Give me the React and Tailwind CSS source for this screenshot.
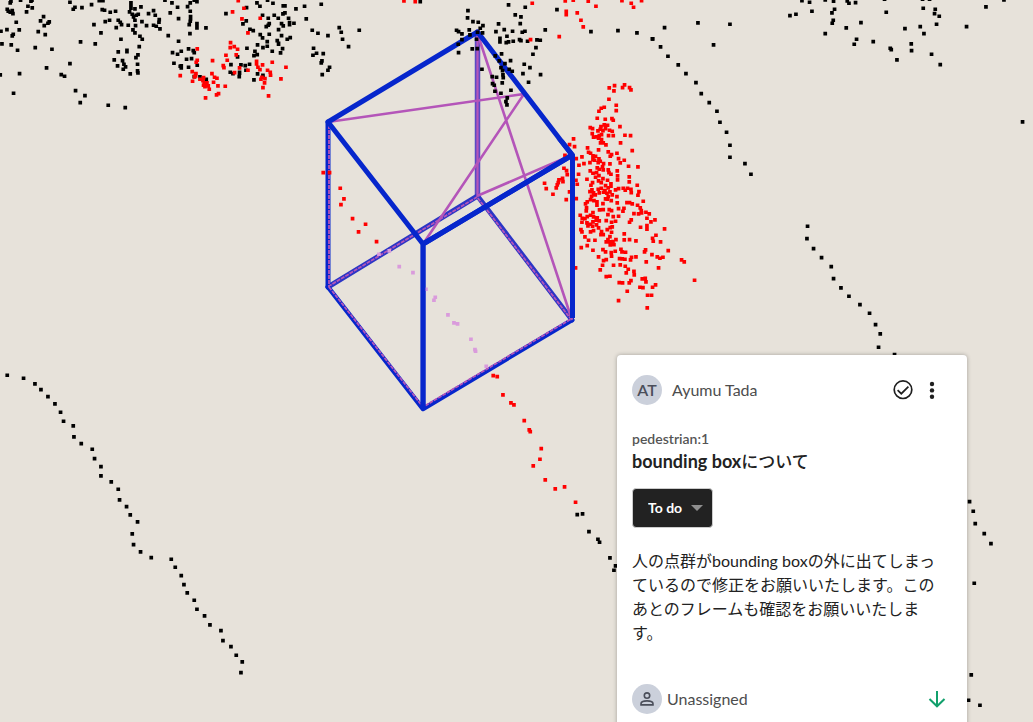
// Each group lists x,y pairs in thirds of a scene unit, relative to its origin.
const GROUPS = [
  {
    color: "#000000", x: 0, y: 0,
    pts: "32,3 30,8 61,0 92,3 95,0 21,27 24,33 36,31 38,40 30,36 83,18 79,35 96,23 48,66 20,88 2,93 57,89 39,102 36,107 5,131 33,134 52,150 105,142 155,147 130,49 121,62 147,65 143,69 132,76 114,94 135,103 209,6 224,21 219,27 245,22 274,13 297,1 308,1 306,28 313,30 330,36 346,33 281,73 315,64 328,60 302,98 241,125 285,131 209,190 139,203 58,220 0,224 40,279 183,223 193,228 226,271 254,286 240,307 324,315 375,322 392,8 392,15 392,24 404,26 422,20 388,35 396,42 400,50 414,42 408,45 404,60 354,60 360,66 364,73 348,82 384,75 406,76 425,64 439,76 445,40 460,31 465,45 477,58 476,66 460,75 468,78 479,86 398,89 404,98 419,108 426,117 362,117 417,139 354,155 380,150 380,154 342,179 367,181 413,164 407,172 352,197 371,192 369,207 376,200 390,221 412,192 412,212 413,218 494,0 515,8 532,21 510,38 535,55 504,106 535,123 517,157 532,162 521,189 540,198",
  },
  {
    color: "#000000", x: 180, y: 0,
    pts: "42,0 50,4 30,8 22,19 30,33 31,49 31,56 30,63 27,73 50,70 50,83 77,83 29,100 3,153 25,146 39,151 42,157 19,177 34,175 51,195 3,197 3,203 25,201 42,229 59,230 78,237 137,40 199,22 262,0 230,8 239,18 278,9 309,17 314,17 373,18 347,26 423,12 378,56 314,38 308,41 282,45 247,45 264,54 294,54 325,54 198,62 188,71 267,70 264,75 258,79 304,70 309,77 328,67 328,73 341,69 295,88 209,87 219,91 240,103 267,102 304,106 247,113 261,124 261,138 232,134 248,142 321,117 330,112 291,121 295,129 295,132 307,145 301,158 276,153 200,144 224,153 231,163 221,166 172,170 152,193 182,194 195,196 208,192 197,210 150,216 158,220 178,216 177,229 232,221 248,225 221,239 396,90 413,99 443,106 477,82 483,96 487,117 505,139 537,90 400,144 398,165 409,159 429,160 425,182 423,188 448,201 443,210 426,223 178,219 50,74 720,4",
  },
  {
    color: "#ff0000", x: 180, y: 0,
    pts: "174,1 157,35 191,24 185,56 240,54 203,98 151,127 150,142 162,139 172,147 168,164 137,165 141,180 129,196 131,202 178,203 203,210 163,217 51,146 51,180 48,186 97,181 0,226 36,214 47,220 43,230 37,243 59,237 70,232 68,241 72,248 76,253 74,259 80,248 84,257 87,267 95,220 103,231 110,234 100,246 113,257 135,258 115,280 109,284 76,293 229,183 229,191 247,194 233,201 239,208 276,186 317,201 262,210 270,216 271,225 245,231 242,237 254,235 253,248 248,262 265,287 302,236 46,227 671,2 705,4 70,255",
  },
  {
    color: "#000000", x: 440, y: 0,
    pts: "83,31 82,53 98,64 114,66 120,84 128,76 127,98 112,96 89,104 87,89 49,90 55,94 65,101 65,118 54,132 55,157 109,117 96,146 111,145 125,207 205,14 255,21 225,44 242,50 240,70 175,71 192,88 167,94 217,93 246,96 254,93 315,89 200,108 179,114 179,125 198,127 205,125 219,123 238,118 242,121 262,123 290,119 300,120 287,142 278,162 184,161 165,167 177,182 211,181 194,190 182,202 187,211 207,207 216,213 252,192 269,202 301,223 248,220 188,224 189,232 156,229 169,231 265,246 186,248 157,250 162,255 164,273 182,279 212,270 201,293 197,304 200,314 350,28 452,94 533,91 590,98 637,116",
  },
  {
    color: "#ff0000", x: 440, y: 0,
    pts: "276,9 375,2 399,0 378,33 378,43 411,38 422,60 429,80 444,3 467,18 545,1 573,9 580,21 604,1 357,109 271,118",
  },
  {
    color: "#000000", x: 640, y: 0,
    pts: "37,116 73,82 61,140 83,168 114,194 137,220 167,247 183,280 207,307 230,333 239,366 259,396 269,435 269,471 314,490 332,522 173,68 269,72 220,134 485,1 508,6 555,-1 580,3 621,2 626,9 646,7 449,46 467,42 515,33 583,27 575,38 579,60 576,69 555,100 618,83 662,67 649,117 642,132 699,124 738,36 733,-3 847,-3 868,-3 849,24 885,27 883,40 897,48 889,72 840,79 794,85 851,100 813,131 814,151 750,144 753,148 770,179 874,162 900,193 979,79 1037,20 1091,-1 1147,365",
  },
  {
    color: "#ff0000", x: 530, y: 75,
    pts: "237,38 253,31 251,47 283,29 277,37 298,37 302,44 236,72 258,90 258,106 222,96 213,99 206,108 201,129 225,132 245,130 249,135 180,157 187,160 212,154 210,162 203,167 222,149 232,150 226,160 218,166 238,165 246,168 269,154 186,175 190,186 198,185 207,181 214,178 205,189 214,193 235,181 249,181 284,180 301,181 211,203 219,203 227,209 271,203 130,191 118,208 133,214 172,218 205,224 175,231 181,234 188,242 234,230 244,238 240,243 260,234 306,226 104,240 138,250 155,245 196,243 193,255 206,251 204,262 210,258 188,253 265,250 270,263 282,255 146,270 161,265 179,262 220,265 217,275 201,278 207,282 219,284 239,266 234,284 295,273 323,275 101,279 109,286 111,298 145,297 180,287 188,294 199,292 206,301 196,306 236,292 242,297 261,287 262,302 297,305 170,312 97,309 86,314 84,322 98,319 81,329 78,338 43,324 48,340 68,357 108,373 137,315 141,327 118,350 138,370 187,322 182,330 205,317 213,322 218,310 232,315 226,331 213,339 204,342 224,346 234,338 242,326 242,333 256,344 262,314 265,340 279,339 285,345 292,339 302,342 303,352 297,320 321,330 326,349 323,360 179,349 185,344 190,353 184,363 195,359 207,353 220,351 230,354 239,350 246,359 234,364 226,371 181,373 171,380 166,386 191,376 200,380 218,385 231,372 243,376 260,364 261,383 290,382 298,382 306,386 339,378 322,390 330,398 333,406 311,415 325,416 334,413 347,411 357,416 169,398 168,407 200,390 208,404 188,412 181,420 171,424 219,403 237,403 244,406 265,400 281,399 278,408 249,424 265,423 233,418 150,420 156,429 164,430 190,425 201,428 198,435 188,440 181,447 170,443 155,441 207,437 228,436 244,441 256,438 303,434 298,441 350,429 362,440 374,434 152,463 155,470 173,452 187,453 199,449 205,458 190,466 181,470 214,469 240,457 246,455 244,471 231,463 331,456 350,451 350,462 403,461 164,485 175,495 194,495 212,478 219,478 239,484 233,493 228,500 237,500 257,493 248,499 282,476 282,494 298,493 317,497 240,509 251,508 367,489 369,498 377,480 391,500 153,517 171,511 188,525 218,523 226,530 243,532 244,543 255,528 272,522 275,530 286,531 346,524 343,530 365,538 414,526 205,545 228,553 220,556 217,570 250,570 268,550 276,551 284,552 304,546 301,554 317,545 348,560 381,545 389,549 398,546 454,554 462,560 210,584 270,569 285,573 294,582 288,593 311,588 312,599 385,578 136,578 228,604 239,603 267,622 277,623 302,616 297,623 336,611 345,609 347,620 329,636 338,637 367,636 376,629 291,648 352,660 364,660 265,676 351,698 493,615",
  },
  {
    color: "#ff0000", x: 310, y: 80,
    pts: "39,277 58,277 90,324 101,356 92,373 127,415 166,432 145,455 199,484",
  },
  {
    color: "#da9bdc", x: 310, y: 80,
    pts: "206,522 237,512 267,559 308,577 347,627 375,651 371,660 413,704 431,728 442,731 482,777 494,808 496,813 528,858",
  },
  {
    color: "#ff0000", x: 470, y: 360,
    pts: "69,46 81,49 98,104 122,128 131,134 162,181 177,209 180,214 213,265 209,297 189,317 225,359 255,386 283,380 316,426",
  },
  {
    color: "#000000", x: 470, y: 360,
    pts: "321,463 337,461 356,514 383,537 388,546 419,593 436,617 431,630",
  },
  {
    color: "#000000", x: 0, y: 360,
    pts: "21,45 70,54 104,71 122,88 143,109 164,131 181,156 190,183 219,197 221,230 243,250 276,267 283,295 302,319 302,347 333,365 354,387 358,419 379,439 390,464 412,485 396,521 400,553 421,575 453,592 513,597 525,621 543,646 551,673 561,698 582,720 590,747 613,767 629,794 662,811 668,841 692,859 708,885 726,905 722,937",
  },
  {
    color: "#000000", x: 790, y: 210,
    pts: "52,48 50,85 70,115 94,142 123,169 130,205 152,233 176,258 209,283 238,309 256,343 270,371 265,411 313,433 538,874 549,903 555,940 582,970 602,1000 552,1119 543,1394 535,1470 569,1485",
  },
];

// One path per group: every point becomes a small square.
function squares({ x, y, pts }) {
  return pts
    .split(" ")
    .map((p) => {
      const [px, py] = p.split(",").map(Number);
      return `M${(x + px / 3 - 1.6).toFixed(1)} ${(y + py / 3 - 1.6).toFixed(1)}h3.7v3.7h-3.7z`;
    })
    .join("");
}

function PointCloud() {
  return (
    <svg
      className="block h-full w-full"
      viewBox="0 0 1033 722"
      preserveAspectRatio="xMidYMid slice"
      role="img"
      aria-label="Point cloud"
    >
      <g fill="none" stroke="#0626cc" strokeWidth="5" strokeLinecap="round" strokeLinejoin="round">
        <path d="M477.500 32V196" stroke="#5a4ac4" strokeWidth="5.5" />
        <path d="M477.500 196L328 287M477.500 196L572 320" stroke="#2a35c6" />
        <path d="M328 287L423 409L572 320" strokeWidth="4.5" />
        <path d="M328 122V287" />
      </g>
      <g fill="none" stroke="#b455b9" strokeWidth="2.6">
        <path d="M328 122L524 94L423 244M477 32L572 320M477 196L572 155" />
        <path d="M477.500 32V196" strokeWidth="2.200" />
        <path
          d="M329 125V286L477 197L570 318M329 287L423 407L571 319"
          strokeWidth="1.800"
          strokeDasharray="4 1"
        />
      </g>
      <path
        d="M477.500 32L328 122L423 244L572 155ZM423 244V409M572.500 155V318"
        fill="none"
        stroke="#0626cc"
        strokeWidth="5"
        strokeLinejoin="round"
      />
      {GROUPS.map((g, i) => (
        <path key={i} d={squares(g)} fill={g.color} />
      ))}
      <path
        d="M477.500 36L572.500 155V318M572.500 155L423 244V409"
        fill="none"
        stroke="#0626cc"
        strokeWidth="5"
        strokeLinejoin="round"
        clipPath="inset(105px 0 0 0)"
      />
    </svg>
  );
}

function CheckCircleIcon() {
  return (
    <svg viewBox="0 0 24 24" className="size-6" fill="none" stroke="#1f1f1f" strokeWidth="1.700" aria-hidden="true">
      <circle cx="12" cy="11.700" r="8.800" />
      <path d="M6.600 12.100L10.300 15.700L17.400 8.600" />
    </svg>
  );
}

function MoreIcon() {
  return (
    <svg viewBox="0 0 24 24" className="size-6" fill="#1f1f1f" aria-hidden="true">
      <circle cx="12" cy="6" r="2.200" />
      <circle cx="12" cy="12.400" r="2.200" />
      <circle cx="12" cy="18.700" r="2.200" />
    </svg>
  );
}

function PersonIcon() {
  return (
    <svg viewBox="0 0 20 20" className="size-5" fill="none" stroke="#4a4e5a" strokeWidth="1.600" aria-hidden="true">
      <circle cx="10" cy="6.600" r="2.700" />
      <path d="M4 15.900v-1.100c0-1.800 3-2.900 6-2.900s6 1.100 6 2.900v1.100z" />
    </svg>
  );
}

function ArrowDownIcon() {
  return (
    <svg viewBox="0 0 20 20" className="size-5" fill="none" stroke="#12a06c" strokeWidth="2" aria-hidden="true">
      <path d="M10 2V17M2.500 10L10 17.300L17.500 10" />
    </svg>
  );
}

function IssueCard() {
  return (
    <article className="w-[350px] rounded-[4px] bg-white px-[15px] pt-5 pb-6 shadow-[0_0_4px_rgba(0,0,0,0.3)]">
      <header className="flex items-center">
        <span className="flex size-[30px] items-center justify-center rounded-full bg-[#cbd0db] text-base font-semibold text-[#4a4e5a]">
          AT
        </span>
        <span className="ml-[10px] text-base leading-6 text-[#4d4d4d]">Ayumu Tada</span>
        <div className="ml-auto mr-2 flex gap-[5px]">
          <button type="button" aria-label="Resolve">
            <CheckCircleIcon />
          </button>
          <button type="button" aria-label="More">
            <MoreIcon />
          </button>
        </div>
      </header>

      <p className="mt-6 text-sm leading-5 font-semibold text-[#555555]">pedestrian:1</p>
      <h2 className="text-lg leading-6 font-bold text-[#222222]">
        bounding box<span className="text-[17px] font-medium">について</span>
      </h2>

      <div className="relative mt-[14px] h-10 w-[81px]">
        <select
          aria-label="Status"
          className="h-full w-full appearance-none rounded-[4px] border border-[#cccccc] bg-[#222222] pl-[15px] text-sm font-bold text-white"
        >
          <option>To do</option>
        </select>
        <svg
          viewBox="0 0 12 6"
          className="pointer-events-none absolute top-[17px] right-[10px] h-[6px] w-3"
          fill="#8f8f8f"
          aria-hidden="true"
        >
          <path d="M0 0H12L6 6Z" />
        </svg>
      </div>

      <p className="mt-[21px] mr-[10px] text-base leading-6 text-[#222222]">
        人の点群がbounding boxの外に出てしまっているので修正をお願いいたします。このあとのフレームも確認をお願いいたします。
      </p>

      <footer className="mt-[39px] flex items-center">
        <span className="flex size-[30px] items-center justify-center rounded-full bg-[#cbd0db]">
          <PersonIcon />
        </span>
        <span className="ml-[5px] text-base leading-6 text-[#4d4d4d]">Unassigned</span>
        <button type="button" aria-label="Priority: low" className="ml-auto mr-[5px]">
          <ArrowDownIcon />
        </button>
      </footer>
    </article>
  );
}

export default function App() {
  return (
    <main
      lang="ja"
      className="relative h-screen overflow-hidden bg-[#e7e2da] font-[Lato,'Noto_Sans_CJK_JP',sans-serif]"
    >
      <PointCloud />
      <div className="absolute top-[355px] right-[66px]">
        <IssueCard />
      </div>
    </main>
  );
}
